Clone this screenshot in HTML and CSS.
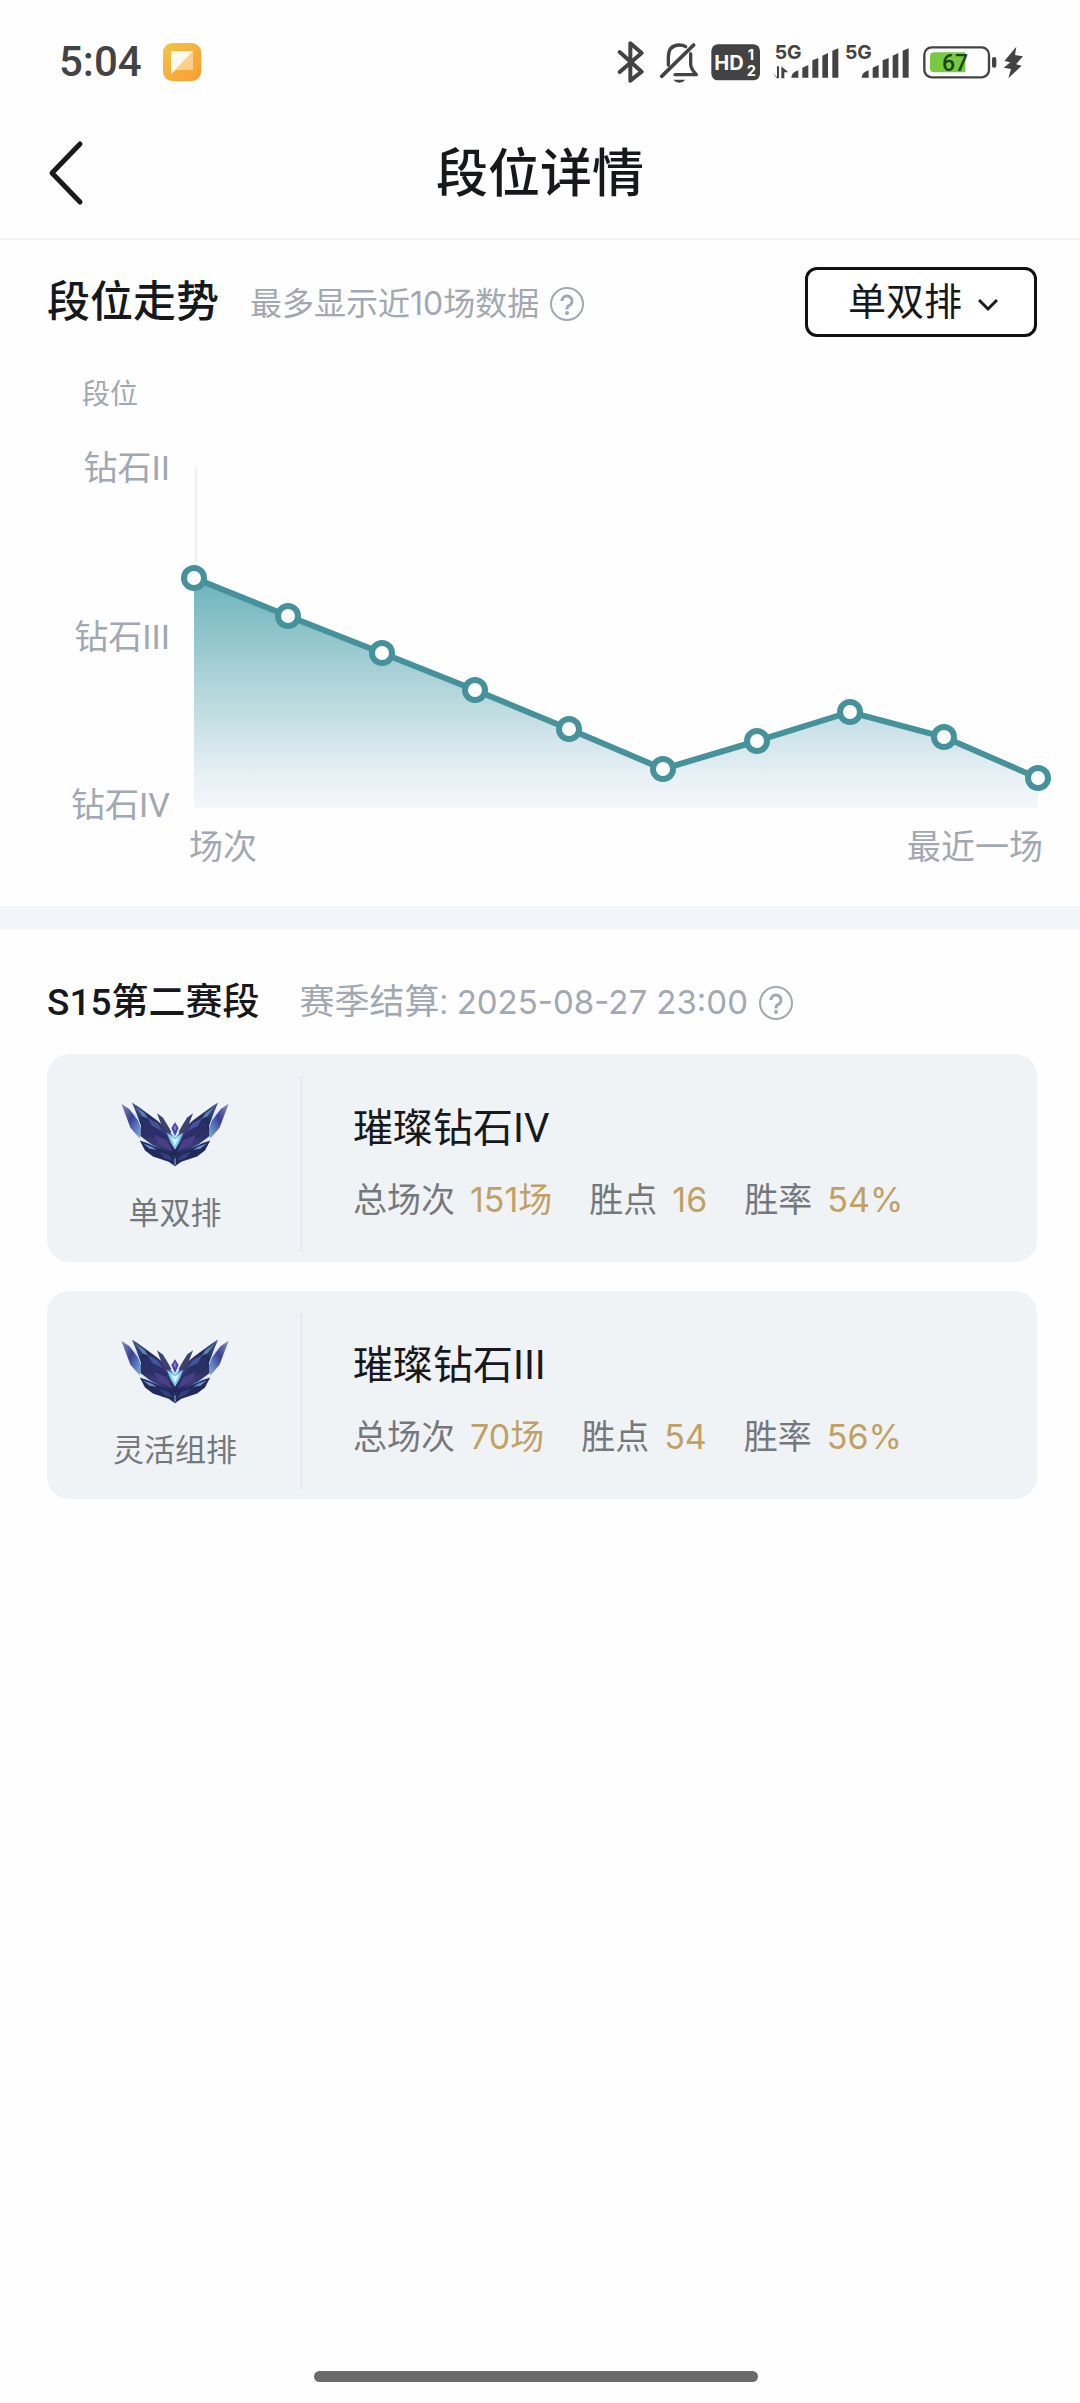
FILE: index.html
```html
<!DOCTYPE html>
<html lang="zh-CN">

<head>
    <meta charset="UTF-8">
    <meta name="viewport" content="width=device-width, initial-scale=1.0">
    <title>段位详情</title>
    <link rel="stylesheet" href="styles.css">
</head>

<body>
    <!-- shared shapes -->
    <svg class="defs" width="0" height="0" aria-hidden="true">
        <defs>
            <linearGradient id="wing" x1="0" y1="0" x2="1" y2="1">
                <stop offset="0" stop-color="#4a6096" />
                <stop offset="0.3" stop-color="#232c58" />
                <stop offset="0.7" stop-color="#3b3c7c" />
                <stop offset="1" stop-color="#1c2350" />
            </linearGradient>
            <linearGradient id="feather" x1="0" y1="0" x2="1" y2="1">
                <stop offset="0" stop-color="#8a93b8" />
                <stop offset="0.45" stop-color="#3a3f94" />
                <stop offset="1" stop-color="#7fb4e4" />
            </linearGradient>
            <filter id="glow" x="-20%" y="-20%" width="140%" height="140%">
                <feGaussianBlur stdDeviation="4" />
            </filter>
            <g id="half">
                <path d="M34 66 L58 82 L84 116 L94 140 L90 172 L62 140 Z" fill="url(#feather)" />
                <path d="M66 62 L84 74 L142 116 L172 142 L197 172 L197 226 L160 208 L124 188 L92 164 L94 134 L80 96 Z" fill="url(#wing)" />
                <path d="M78 76 L104 94 L116 112 L98 104 Z" fill="#5a83b8" />
                <path d="M96 112 L140 134 L172 166 L186 204 L148 178 L110 160 Z" fill="#2a2f68" />
                <path d="M112 108 L144 126 L160 150 L128 134 Z" fill="#43549a" />
                <path d="M132 160 L172 176 L190 212 L150 192 Z" fill="#483f84" />
                <path d="M90 178 L114 186 L150 202 L186 218 L197 226 L197 256 L178 242 L130 226 L106 208 Z" fill="#222a5c" />
                <path d="M100 187 L124 195 L142 206 L120 203 Z" fill="#6296cc" />
                <path d="M148 212 L178 222 L190 240 L164 230 Z" fill="#35407e" />
                <path d="M142 95 L160 108 L176 134 L186 152 L178 158 L158 136 Z" fill="#3b4468" />
                <path d="M172 154 L197 168 L197 206 L184 184 Z" fill="#7ecbf2" />
                <path d="M184 168 L197 174 L197 194 Z" fill="#d8f6ff" />
            </g>
            <symbol id="emblem" viewBox="30 55 334 206">
                <path d="M40 76 L96 174 L130 222 L197 254 L264 222 L298 174 L354 76 L290 110 L240 150 L154 150 L104 110 Z" fill="#a9d4f8" opacity="0.5" filter="url(#glow)" />
                <use href="#half" />
                <use href="#half" transform="translate(394 0) scale(-1 1)" />
                <path d="M197 122 L208 140 L197 164 L186 140 Z" fill="#4b3fa5" />
                <path d="M197 130 L202 140 L197 150 L192 140 Z" fill="#7c78dc" />
                <path d="M197 232 V252" stroke="#8fc4ee" stroke-width="3" />
            </symbol>
            <symbol id="help" viewBox="0 0 36 36">
                <circle cx="18" cy="18" r="16" fill="none" stroke="currentColor" stroke-width="2" />
                <path d="M13 15 a5 5 0 1 1 7 4.500 q-2 1 -2 4" fill="none" stroke="currentColor" stroke-width="3" />
                <circle cx="18" cy="27" r="2" fill="currentColor" />
            </symbol>
        </defs>
    </svg>

    <div class="status-bar">
        <div class="status-left">
            <span class="time">5:04</span>
            <svg width="38" height="38" viewBox="0 0 38 38">
                <defs>
                    <linearGradient id="note" x1="0" y1="0" x2="1" y2="1">
                        <stop offset="0" stop-color="#f2c744" />
                        <stop offset="1" stop-color="#f99a33" />
                    </linearGradient>
                </defs>
                <rect width="38" height="38" rx="9" fill="url(#note)" />
                <path d="M8 8 H30 V27 H13 L8 31 Z" fill="#fbd08a" />
                <path d="M8 8 H30 L8 31 Z" fill="#fffaf0" />
            </svg>
        </div>
        <div class="status-right">
            <svg width="35" height="50" viewBox="110 50 105 150">
                <path d="M118 95 L184 154 L150 181 V69 L184 98 L118 155" fill="none" stroke="#434343" stroke-width="12" stroke-linejoin="round" stroke-linecap="round" />
            </svg>
            <svg width="55" height="50" viewBox="215 50 165 150">
                <path d="M244 168 L340 74" stroke="#434343" stroke-width="11" stroke-linecap="round" />
                <path d="M264 134 V112 Q264 74 297 74 Q308 74 316 79 M331 100 V132 Q332 146 348 163 H284" fill="none" stroke="#434343" stroke-width="10" stroke-linecap="round" stroke-linejoin="round" />
                <path d="M279 178 H315 Q308 187 297 187 Q286 187 279 178 Z" fill="#434343" />
            </svg>
            <svg width="60" height="50" viewBox="380 50 180 150">
                <rect x="393" y="72" width="146" height="108" rx="20" fill="#434343" />
                <text class="icon-text" x="402" y="149" font-size="60" fill="#fff">HD</text>
                <text class="icon-text" x="502" y="119" font-size="44" fill="#fff">1</text>
                <text class="icon-text" x="499" y="168" font-size="44" fill="#fff">2</text>
            </svg>
            <svg width="75" height="50" viewBox="560 50 225 150">
                <text class="icon-text" x="583" y="116" font-size="58" fill="#434343">5G</text>
                <path d="M576 157 L590 170 V138 H596 V174 H590 M603 174 V138 L624 156 H612 V174 Z" fill="#434343" />
                <path d="M633 172 Q634 156 654 150 V172 Z M666 172 V142 L684 134 V172 Z M696 172 V120 L714 113 V172 Z M726 172 V106 L743 98 V172 Z M756 172 V91 L774 84 V172 Z" fill="#434343" />
            </svg>
            <svg width="75" height="50" viewBox="785 50 225 150">
                <text class="icon-text" x="794" y="116" font-size="58" fill="#434343">5G</text>
                <path d="M844 172 Q845 156 865 150 V172 Z M877 172 V142 L895 134 V172 Z M907 172 V120 L925 113 V172 Z M937 172 V106 L954 98 V172 Z M967 172 V91 L985 84 V172 Z" fill="#434343" />
            </svg>
            <svg width="110" height="50" viewBox="1010 50 330 150">
                <rect x="1032" y="81" width="194" height="90" rx="22" fill="none" stroke="#434343" stroke-width="7" />
                <path d="M1062 96 H1155 V156 H1062 Q1049 156 1049 143 V109 Q1049 96 1062 96 Z" fill="#7ac943" />
                <text class="battery-text" x="1085" y="152" font-size="69" fill="#1d4410">67</text>
                <rect x="1235" y="110" width="13" height="32" rx="6" fill="#434343" />
                <path d="M1308 79 L1272 122 L1290 126 L1270 142 L1292 146 L1284 174 L1324 136 L1307 132 L1328 108 L1304 104 Z" fill="#434343" />
            </svg>
        </div>
    </div>

    <header class="nav">
        <button type="button" class="back" aria-label="返回">
            <svg width="36" height="66" viewBox="0 0 36 66">
                <path d="M32 4 L4 33 L32 62" fill="none" stroke="#1a1a1a" stroke-width="5" stroke-linecap="round" stroke-linejoin="round" />
            </svg>
        </button>
        <h1>段位详情</h1>
    </header>

    <main>
        <section class="trend">
            <div class="trend-head">
                <h2>段位走势</h2>
                <div class="hint">
                    <span>最多显示近10场数据</span>
                    <button type="button" class="help" aria-label="说明"><svg width="36" height="36"><use href="#help" /></svg></button>
                </div>
                <div class="picker">
                    <select aria-label="排位类型">
                        <option selected>单双排</option>
                        <option>灵活组排</option>
                    </select>
                    <svg class="caret" width="20" height="14" viewBox="0 0 20 14">
                        <path d="M1 2 L10 11 L19 2" fill="none" stroke="#1a1a1a" stroke-width="3" />
                    </svg>
                </div>
            </div>

            <div class="axis-title">段位</div>
            <div class="chart">
                <div class="y-labels">
                    <span>钻石II</span>
                    <span>钻石III</span>
                    <span>钻石IV</span>
                </div>
                <svg class="plot" viewBox="0 0 844 341">
                    <defs>
                        <linearGradient id="area" gradientUnits="userSpaceOnUse" x1="0" y1="111" x2="0" y2="341">
                            <stop offset="0" stop-color="#6cb3bb" />
                            <stop offset="0.5" stop-color="#b5d7dc" />
                            <stop offset="0.85" stop-color="#e6f0f5" />
                            <stop offset="1" stop-color="#f5f6fa" />
                        </linearGradient>
                    </defs>
                    <path d="M2 0 V111" stroke="#f2f3f5" stroke-width="3" />
                    <path d="M0 111 L94 149 L188 186 L281 223 L375 262 L469 302 L563 274 L656 245 L750 270 L844 311 V341 H0 Z" fill="url(#area)" />
                    <path d="M0 111 L94 149 L188 186 L281 223 L375 262 L469 302 L563 274 L656 245 L750 270 L844 311" fill="none" stroke="#46929b" stroke-width="6" />
                    <g fill="#fff" stroke="#46929b" stroke-width="6">
                        <circle cx="0" cy="111" r="10" />
                        <circle cx="94" cy="149" r="10" />
                        <circle cx="188" cy="186" r="10" />
                        <circle cx="281" cy="223" r="10" />
                        <circle cx="375" cy="262" r="10" />
                        <circle cx="469" cy="302" r="10" />
                        <circle cx="563" cy="274" r="10" />
                        <circle cx="656" cy="245" r="10" />
                        <circle cx="750" cy="270" r="10" />
                        <circle cx="844" cy="311" r="10" />
                    </g>
                </svg>
                <div class="x-labels">
                    <span>场次</span>
                    <span>最近一场</span>
                </div>
            </div>
        </section>

        <section class="season">
            <div class="season-head">
                <h2>S15第二赛段</h2>
                <span class="season-end">赛季结算: <time>2025-08-27 23:00</time></span>
                <button type="button" class="help" aria-label="说明"><svg width="36" height="36"><use href="#help" /></svg></button>
            </div>

            <div class="card">
                <div class="queue">
                    <svg width="110" height="68"><use href="#emblem" /></svg>
                    <span>单双排</span>
                </div>
                <div class="info">
                    <h3>璀璨钻石IV</h3>
                    <dl>
                        <div><dt>总场次</dt><dd>151场</dd></div>
                        <div><dt>胜点</dt><dd>16</dd></div>
                        <div><dt>胜率</dt><dd>54%</dd></div>
                    </dl>
                </div>
            </div>

            <div class="card">
                <div class="queue">
                    <svg width="110" height="68"><use href="#emblem" /></svg>
                    <span>灵活组排</span>
                </div>
                <div class="info">
                    <h3>璀璨钻石III</h3>
                    <dl>
                        <div><dt>总场次</dt><dd>70场</dd></div>
                        <div><dt>胜点</dt><dd>54</dd></div>
                        <div><dt>胜率</dt><dd>56%</dd></div>
                    </dl>
                </div>
            </div>
        </section>
    </main>

    <div class="home-bar"></div>
</body>

</html>
```
FILE: styles.css
```css
* {
    box-sizing: border-box;
}

body {
    font-family: Roboto, "Noto Sans CJK SC", sans-serif;
    margin: 0;
    min-height: 100vh;
    display: flex;
    flex-direction: column;
    background-color: #fefefe;
    color: #16181c;
}

h1,
h2,
h3,
dl,
dd {
    margin: 0;
}

h1,
h2 {
    font-weight: 500;
}

button {
    padding: 0;
    border: none;
    background: none;
    color: inherit;
    cursor: pointer;
}

svg {
    display: block;
}

.defs {
    position: absolute;
}

.status-bar {
    display: flex;
    justify-content: space-between;
    align-items: center;
    height: 108px;
    padding: 16px 53px 0 59px;
}

.status-left {
    display: flex;
    align-items: center;
    gap: 21px;
}

.time {
    font-size: 42px;
    line-height: 42px;
    font-weight: 500;
    color: #434343;
}

.status-right {
    display: flex;
}

.icon-text {
    font-family: Inter, sans-serif;
    font-weight: 700;
}

.battery-text {
    font-family: Roboto, sans-serif;
    font-weight: 500;
}

.nav {
    display: grid;
    grid-template-columns: 96px 1fr 96px;
    align-items: center;
    height: 132px;
    border-bottom: 2px solid #f3f3f4;
}

.back {
    padding-left: 48px;
}

.nav h1 {
    padding-top: 4px;
    text-align: center;
    font-size: 52px;
    line-height: 60px;
}

.trend {
    padding-bottom: 41px;
    border-bottom: 23px solid #f2f6fa;
}

.trend-head {
    display: flex;
    align-items: center;
    padding: 27px 43px 0 47px;
}

.trend-head h2 {
    font-size: 43px;
    line-height: 70px;
}

.hint {
    display: flex;
    align-items: center;
    margin-left: 31px;
    padding-top: 4px;
    font-family: Inter, "Noto Sans CJK SC", sans-serif;
    font-size: 32px;
    line-height: 40px;
    color: #a2a8b2;
}

.help {
    margin-left: 10px;
    color: #a2a8b2;
}

.picker {
    display: grid;
    align-items: center;
    margin-left: auto;
}

.picker select {
    grid-area: 1 / 1;
    appearance: none;
    width: 232px;
    height: 70px;
    padding: 0 0 0 40px;
    border: 3px solid #111;
    border-radius: 12px;
    background: #fff;
    color: #16181c;
    font-family: inherit;
    font-size: 38px;
}

.caret {
    grid-area: 1 / 1;
    justify-self: end;
    margin: 6px 39px 0 0;
    pointer-events: none;
}

.axis-title {
    margin: 38px 0 35px 82px;
    font-size: 28px;
    line-height: 40px;
    color: #a2a8b2;
}

.chart {
    display: grid;
    grid-template-columns: 170px 1fr;
    column-gap: 24px;
    padding-right: 42px;
    color: #a2a8b2;
    font-size: 34px;
    line-height: 36px;
}

.y-labels {
    display: flex;
    flex-direction: column;
    justify-content: space-between;
    text-align: right;
}

.plot {
    width: 100%;
    margin: 17px 0 15px;
    overflow: visible;
}

.x-labels {
    grid-column: 2;
    display: flex;
    justify-content: space-between;
    margin: 6px -5px 0;
}

.season {
    padding: 45px 43px 0 47px;
}

.season-head {
    display: flex;
    align-items: center;
    margin-bottom: 23px;
    line-height: 56px;
}

.season-head h2 {
    font-size: 37px;
}

.season-end {
    margin-left: 40px;
    font-size: 35px;
    color: #a2a8b2;
}

.season-end time {
    font-family: Inter, sans-serif;
    font-size: 33px;
}

.card {
    display: grid;
    grid-template-columns: 256px 1fr;
    min-height: 208px;
    margin-bottom: 29px;
    padding: 22px 0 10px;
    border-radius: 22px;
    background-color: #f0f3f6;
}

.queue {
    display: flex;
    flex-direction: column;
    align-items: center;
    gap: 26px;
    padding: 24px 0 0 3px;
    border-right: 3px solid #e8ebef;
    font-size: 31px;
    line-height: 40px;
    color: #74787c;
}

.info {
    padding: 28px 0 0 50px;
}

.info h3 {
    font-size: 40px;
    line-height: 50px;
    font-weight: 400;
}

.info dl {
    display: flex;
    gap: 37px;
    margin-top: 22px;
    font-family: Inter, "Noto Sans CJK SC", sans-serif;
    font-size: 34px;
    line-height: 48px;
}

.info dl div {
    display: flex;
    gap: 15px;
}

dt {
    color: #74787c;
}

dd {
    color: #bfa163;
}

.home-bar {
    width: 444px;
    height: 11px;
    margin: auto calc(50% - 218px) 21px auto;
    border-radius: 6px;
    background-color: #6a6a6a;
}
```
